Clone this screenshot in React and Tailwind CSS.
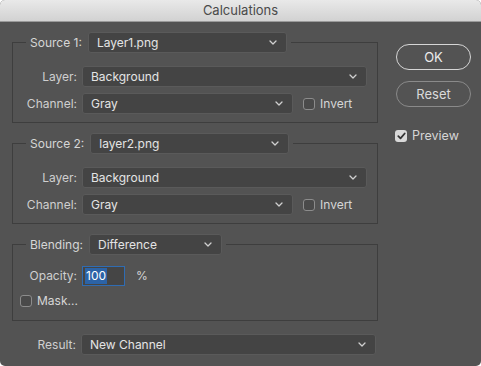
import React from "react";

const Chevron = () => (
  <svg width="8" height="5" viewBox="0 0 8 5" className="shrink-0">
    <path d="M1 1 L4 4 L7 1" fill="none" stroke="#d0d0d0" strokeWidth="1.3" strokeLinecap="round" strokeLinejoin="round" />
  </svg>
);

const Select = ({ value, width }) => (
  <div
    className={`${width} h-[21px] flex items-center justify-between pl-[8px] pr-[9px] bg-[#444444] border border-[#5a5a5a] rounded-[3px] text-[#e4e4e4]`}
  >
    <span>{value}</span>
    <Chevron />
  </div>
);

const Check = ({ checked }) =>
  checked ? (
    <div className="w-[12px] h-[12px] rounded-[3px] bg-[#d9d9d9] flex items-center justify-center">
      <svg width="9" height="8" viewBox="0 0 9 8">
        <path d="M1.3 4.2 L3.5 6.3 L7.7 1.5" fill="none" stroke="#333" strokeWidth="1.8" strokeLinecap="round" strokeLinejoin="round" />
      </svg>
    </div>
  ) : (
    <div className="w-[12px] h-[12px] rounded-[3px] bg-[#4a4a4a] border border-[#8c8c8c]" />
  );

const Row = ({ label, children }) => (
  <div className="flex items-center gap-[5px]">
    <span className="w-[64px] text-right text-[#cfcfcf]">{label}</span>
    {children}
  </div>
);

const Legend = ({ label, value, width }) => (
  <legend className="ml-[13px] px-[4px]">
    <div className="flex items-center gap-[6px]">
      <span className="text-[#d6d6d6]">{label}</span>
      <Select value={value} width={width} />
    </div>
  </legend>
);

const SourceBox = ({ n, file }) => (
  <fieldset className="border border-[#3e3e3e] pb-[8px]">
    <Legend label={`Source ${n}:`} value={file} width="w-[199px]" />
    <div className="flex flex-col gap-[6px] mt-[13px]">
      <Row label="Layer:">
        <Select value="Background" width="w-[285px]" />
      </Row>
      <Row label="Channel:">
        <Select value="Gray" width="w-[211px]" />
        <div className="flex items-center gap-[5px] ml-[5px]">
          <Check />
          <span className="text-[#d6d6d6]">Invert</span>
        </div>
      </Row>
    </div>
  </fieldset>
);

export default function App() {
  return (
    <div className="w-[481px] h-[366px] bg-white">
      <div className="w-[481px] h-[366px] bg-[#535353] rounded-[5px] overflow-hidden font-['Inter','Liberation_Sans',sans-serif] text-[12px] leading-none">
        <div className="h-[22px] bg-gradient-to-b from-[#e9e9e9] to-[#d2d2d2] border-b border-[#9a9a9a] flex items-center justify-center text-[13px] text-[#4a4a4a]">
          Calculations
        </div>

        <div className="flex pt-[10px] pl-[12px]">
          <div className="w-[366px] flex flex-col">
            <SourceBox n={1} file="Layer1.png" />
            <div className="mt-[10px]">
              <SourceBox n={2} file="layer2.png" />
            </div>

            <fieldset className="border border-[#3e3e3e] pb-[13px] mt-[10px]">
              <Legend label="Blending:" value="Difference" width="w-[133px]" />
              <div className="mt-[11px]">
                <Row label="Opacity:">
                  <div className="w-[43px] h-[20px] border border-[#2f6cb3] bg-[#454545] flex items-center pl-[2px]">
                    <span className="bg-[#2c63a6] text-white px-[1px] py-[2px]">100</span>
                  </div>
                  <span className="ml-[6px] text-[#d6d6d6]">%</span>
                </Row>
              </div>
              <div className="flex items-center gap-[5px] mt-[9px] ml-[7px]">
                <Check />
                <span className="text-[#d6d6d6]">Mask...</span>
              </div>
            </fieldset>

            <div className="mt-[13px]">
              <Row label="Result:">
                <Select value="New Channel" width="w-[295px]" />
              </Row>
            </div>
          </div>

          <div className="ml-[18px] w-[75px] flex flex-col">
            <button className="mt-[12px] h-[26px] rounded-full border border-[#d6d6d6] text-[#ececec] text-[13px]">
              OK
            </button>
            <button className="mt-[11px] h-[26px] rounded-full border border-[#8a8a8a] text-[#dadada] text-[13px]">
              Reset
            </button>
            <div className="mt-[23px] flex items-center gap-[5px] -ml-[1px]">
              <Check checked />
              <span className="text-[#d6d6d6] text-[12.5px]">Preview</span>
            </div>
          </div>
        </div>
      </div>
    </div>
  );
}
